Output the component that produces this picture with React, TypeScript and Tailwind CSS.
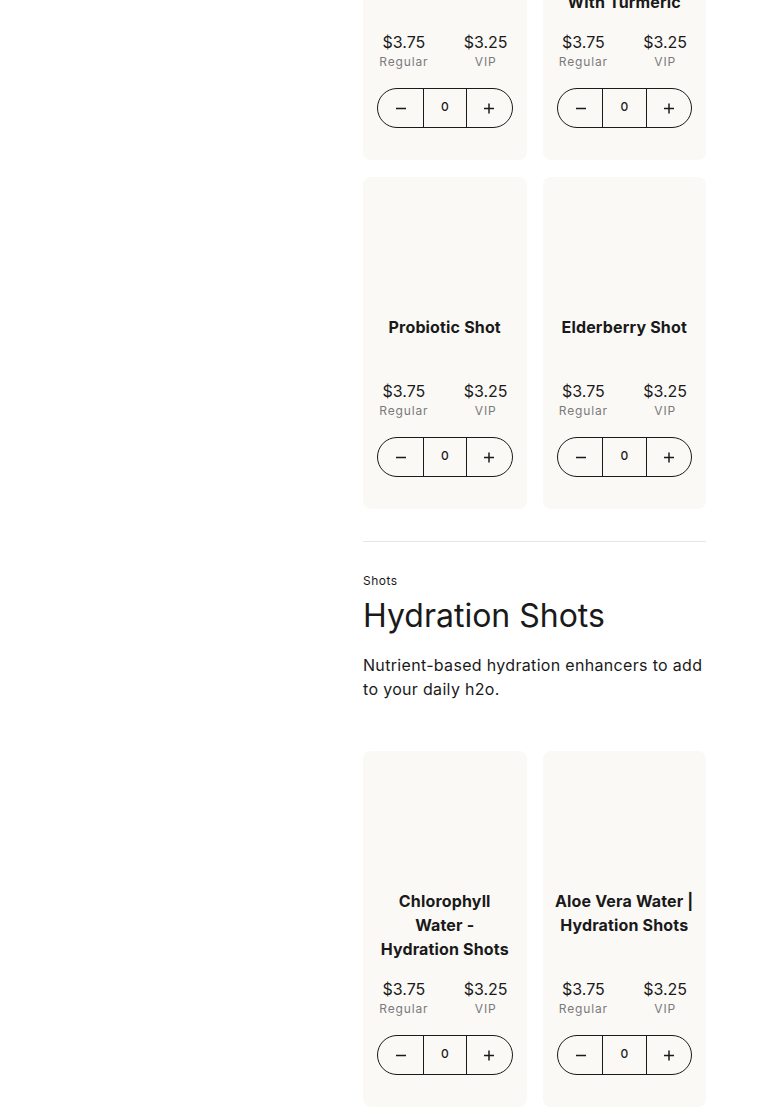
import React from "react";

type P = { name: string };

function Minus() {
  return (
    <svg width="12" height="12" viewBox="0 0 12 12" fill="none">
      <path d="M1 6.5h10" stroke="#1a1a1a" strokeWidth="1.5" />
    </svg>
  );
}
function Plus() {
  return (
    <svg width="12" height="12" viewBox="0 0 12 12" fill="none">
      <path d="M1 6.5h10M6 1.5v10" stroke="#1a1a1a" strokeWidth="1.5" />
    </svg>
  );
}

function Card({ name }: P) {
  return (
    <div className="flex flex-col rounded-lg bg-[#faf9f6] px-[14px] pb-[32px] pt-[138px]">
      <div className="-mx-[2px] min-h-[48px] text-center text-[16px] font-bold leading-[24px] tracking-[0.01em] text-[#1a1a1a]">
        {name}
      </div>
      <div className="mt-auto pt-[18px]">
        <div className="-mx-[14px] grid grid-cols-2 text-center">
          <div>
            <div className="text-[16px] leading-[20px] text-[#1a1a1a]">$3.75</div>
            <div className="mt-[2px] text-[12px] leading-[16px] tracking-[0.07em] text-[#7a7a7a]">Regular</div>
          </div>
          <div>
            <div className="text-[16px] leading-[20px] text-[#1a1a1a]">$3.25</div>
            <div className="mt-[2px] text-[12px] leading-[16px] tracking-[0.07em] text-[#7a7a7a]">VIP</div>
          </div>
        </div>
        <div className="mt-[18px] grid h-10 grid-cols-3 overflow-hidden rounded-full border border-[#1a1a1a]">
          <div className="flex items-center justify-center pl-[2px]">
            <Minus />
          </div>
          <div className="flex items-center justify-center border-x border-[#1a1a1a] pb-[3px] text-[12px] font-medium text-[#1a1a1a]">
            0
          </div>
          <div className="flex items-center justify-center">
            <Plus />
          </div>
        </div>
      </div>
    </div>
  );
}

export default function App() {
  return (
    <div
      className="min-h-[1116px] w-full bg-white text-[#1a1a1a]"
      style={{ fontFamily: "Inter, 'Noto Sans', sans-serif" }}
    >
      <div className="flex">
        <div className="w-[363px] shrink-0" />
        <div className="-mt-[172px] w-[343px] shrink-0">
          <div className="grid grid-cols-2 gap-x-[16px] gap-y-[17px]">
            <Card name="Ginger Shot" />
            <Card name="Immunity Shot With Turmeric" />
            <Card name="Probiotic Shot" />
            <Card name="Elderberry Shot" />
          </div>
          <div className="mt-[32px] border-t border-[#e6e6e6] pt-[31px]">
            <div className="text-[12px] leading-[16px] tracking-[0.04em]">Shots</div>
            <h2 className="mt-[7px] text-[32px] font-normal leading-[40px]">Hydration Shots</h2>
            <p className="mt-[17px] text-[16px] leading-[24px] tracking-[0.02em]">
              Nutrient-based hydration enhancers to add to your daily h2o.
            </p>
          </div>
          <div className="mt-[50px] grid grid-cols-2 gap-x-[16px] gap-y-[17px] pb-10">
            <Card name="Chlorophyll Water - Hydration Shots" />
            <Card name="Aloe Vera Water | Hydration Shots" />
          </div>
        </div>
      </div>
    </div>
  );
}
